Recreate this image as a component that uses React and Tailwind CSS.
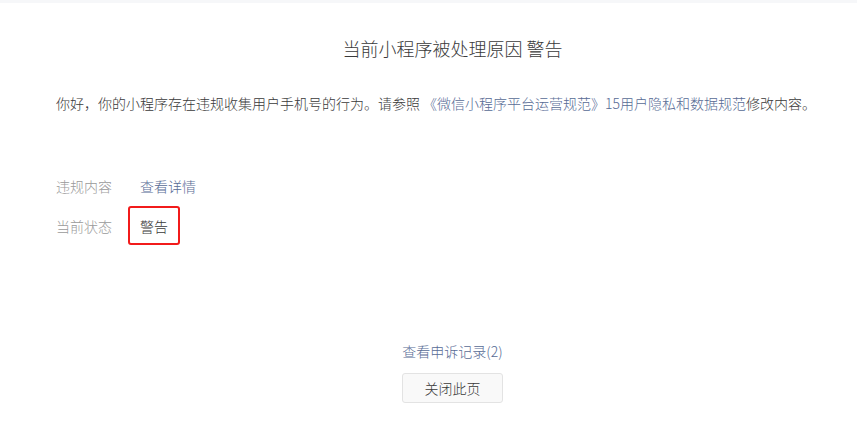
import React from 'react';

export default function App() {
  return (
    <div
      className="w-[857px] h-[428px] bg-white text-[#3a3a3a] font-light"
      style={{ fontFamily: '"Noto Sans CJK SC", "Noto Sans", sans-serif' }}
    >
      <div className="h-[3px] bg-[#f6f7f9]" />
      <div className="pl-[56px] pr-[8px]">
        <h1 className="mt-[33px] text-center text-[18px] leading-[24px] font-light">
          当前小程序被处理原因 警告
        </h1>
        <p className="mt-[33px] text-[14px] leading-[20px]">
          你好，你的小程序存在违规收集用户手机号的行为。请参照{' '}
          <a className="text-[#576b95]">《微信小程序平台运营规范》15用户隐私和数据规范</a>
          修改内容。
        </p>

        <div className="mt-[63px] text-[14px] leading-[20px]">
          <div className="flex items-center">
            <span className="w-[72px] text-[#9a9a9a]">违规内容</span>
            <a className="px-[12px] text-[#576b95]">查看详情</a>
          </div>
          <div className="mt-[10px] flex items-center">
            <span className="w-[72px] text-[#9a9a9a]">当前状态</span>
            <span className="h-[39px] px-[10px] flex items-center border-2 border-[#f21b1b] rounded-[3px]">
              警告
            </span>
          </div>
        </div>

        <div className="mt-[96px] flex flex-col items-center text-[14px] leading-[20px]">
          <a className="text-[#576b95]">查看申诉记录(2)</a>
          <button className="mt-[12px] w-[101px] h-[30px] bg-[#f9f9f9] border border-[#e3e3e3] rounded-[3px] text-[#3a3a3a]">
            关闭此页
          </button>
        </div>
      </div>
    </div>
  );
}
